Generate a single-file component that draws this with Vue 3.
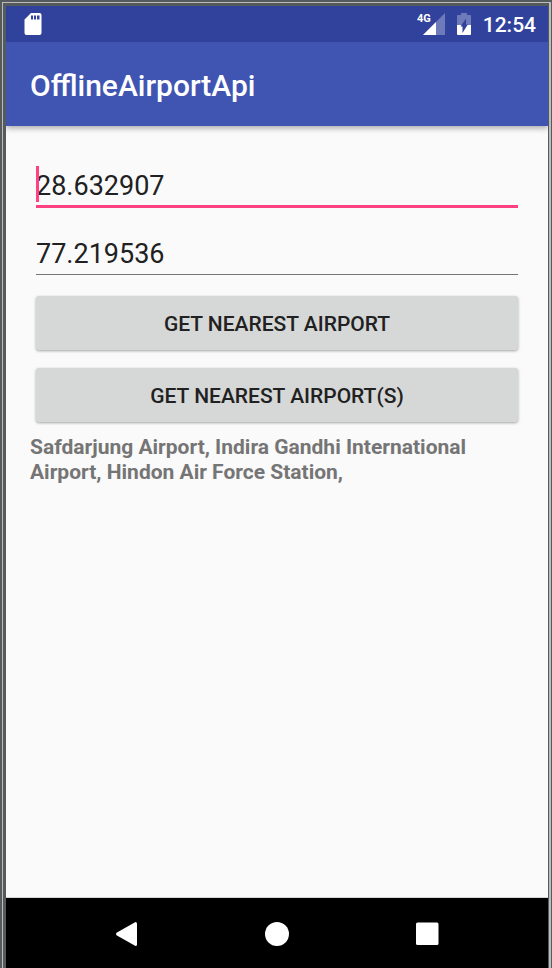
<script setup>
import { ref } from 'vue'

const latitude = ref('28.632907')
const longitude = ref('77.219536')
const airports = ['Safdarjung Airport', 'Indira Gandhi International Airport', 'Hindon Air Force Station']
const result = ref(airports.map((name) => name + ', ').join(''))

function showNearest() {
  result.value = airports[0]
}

function showAll() {
  result.value = airports.map((name) => name + ', ').join('')
}
</script>

<template>
  <div class="frame">
    <div class="bezel">
      <div class="screen">
        <div class="status">
          <svg class="sd" width="18" height="22" viewBox="0 0 18 22" aria-hidden="true">
            <path fill="#fff" fill-rule="evenodd" d="M7 0H15.500Q17.500 0 17.500 2V20Q17.500 22 15.500 22H2.500Q.5 22 .5 20V6.500ZM7 2.500V6.500H9V2.500ZM10 2.500V6.500H12V2.500ZM13 2.500V6.500H15.500V2.500Z" />
          </svg>
          <div class="signal">
            <span class="network">4G</span>
            <svg width="22" height="22" viewBox="0 0 22 22" aria-hidden="true">
              <path fill="#6f7abb" d="M22 0V22H0Z" />
              <path fill="#fff" d="M13 9V22H0Z" />
            </svg>
          </div>
          <svg class="battery" width="14" height="22" viewBox="0 0 14 22" aria-hidden="true">
            <path fill="#6f7abb" d="M4 0H10V2H13Q14 2 14 3V12H0V3Q0 2 1 2H4Z" />
            <path fill="#fff" d="M0 12H14V21Q14 22 13 22H1Q0 22 0 21Z" />
            <path fill="#30429b" d="M9 5.500V11.500H10.800L5.500 20V13.500H3.500Z" />
          </svg>
          <time class="clock">12:54</time>
        </div>
        <header class="appbar">
          <h1>OfflineAirportApi</h1>
        </header>
        <main class="content">
          <div class="field focused">
            <input v-model="latitude" type="text" aria-label="Latitude" />
            <span class="caret"></span>
          </div>
          <div class="field">
            <input v-model="longitude" type="text" aria-label="Longitude" />
          </div>
          <button class="action" type="button" @click="showNearest">GET NEAREST AIRPORT</button>
          <button class="action" type="button" @click="showAll">GET NEAREST AIRPORT(S)</button>
          <p class="result">{{ result }}</p>
        </main>
        <nav class="navbar">
          <button type="button" aria-label="Back">
            <svg width="24" height="24" viewBox="0 0 24 24"><path fill="#fff" d="M20.500 0Q22 0 22 1.500V22.500Q22 24 20.500 24L1.500 13.200Q.5 12 1.500 10.800Z" /></svg>
          </button>
          <button type="button" aria-label="Home">
            <svg width="24" height="24" viewBox="0 0 24 24"><circle cx="12" cy="12" r="12" fill="#fff" /></svg>
          </button>
          <button type="button" aria-label="Recent apps">
            <svg width="24" height="24" viewBox="0 0 24 24"><rect x="1" y=".5" width="22.500" height="22.500" rx="1.500" fill="#fff" /></svg>
          </button>
        </nav>
      </div>
    </div>
  </div>
</template>

<style>
body {
  background: #555a5c;
}
</style>

<style scoped>
.frame,
.frame * {
  box-sizing: border-box;
}

.frame {
  display: flex;
  min-height: 100vh;
  padding: 2px 1px 0 2px;
  background: #555a5c;
  font-family: Roboto, sans-serif;
}

.bezel {
  display: flex;
  flex: 1;
  padding: 3px 1px 0 3px;
  border: solid #bcbcbc;
  border-width: 1px 2px 0 1px;
}

.screen {
  display: flex;
  flex: 1;
  flex-direction: column;
  min-width: 0;
  background: #fafafa;
}

.status {
  display: flex;
  align-items: center;
  height: 36px;
  padding: 0 12px 0 18px;
  background: #30429b;
  color: #fff;
}

.signal {
  position: relative;
  display: flex;
  margin-left: auto;
}

.network {
  position: absolute;
  top: -1px;
  right: 14px;
  font-size: 11px;
  font-weight: 700;
  line-height: 14px;
}

.battery {
  margin-left: 12px;
}

.clock {
  margin-left: 12px;
  padding-top: 2px;
  font-size: 21px;
  font-weight: 500;
  line-height: 36px;
}

.appbar {
  position: relative;
  display: flex;
  align-items: center;
  height: 84px;
  padding: 4px 24px 0;
  background: #4055b1;
  box-shadow: 0 2px 6px rgba(0, 0, 0, 0.35);
  clip-path: inset(0 0 -12px 0);
  color: #fff;
}

h1 {
  margin: 0;
  font-size: 30px;
  font-weight: 500;
  line-height: 36px;
}

.content {
  display: flex;
  flex: 1;
  flex-direction: column;
  padding: 24px;
}

.field {
  position: relative;
  height: 68px;
  padding: 16px 6px 0;
}

.field input {
  display: block;
  width: 100%;
  height: 41px;
  padding: 0;
  border: 0;
  border-bottom: 1px solid #757575;
  border-radius: 0;
  outline: none;
  background: transparent;
  color: #212121;
  font: 400 27px/36px Roboto, sans-serif;
}

.field.focused input {
  height: 42px;
  border-bottom: 3px solid #ff4081;
}

.caret {
  position: absolute;
  top: 16px;
  left: 6px;
  width: 3px;
  height: 36px;
  background: #ff4081;
}

.action {
  height: 54px;
  margin: 10px 6px 8px;
  padding: 2px 12px 0;
  border: 0;
  border-radius: 3px;
  background: #d6d7d7;
  box-shadow: 0 1px 3px rgba(0, 0, 0, 0.35);
  color: #212121;
  font: 500 21px/24px Roboto, sans-serif;
}

.result {
  margin: 5px 0 0;
  color: #757575;
  font-size: 21px;
  font-weight: 700;
  line-height: 25px;
}

.navbar {
  display: flex;
  align-items: center;
  justify-content: center;
  gap: 78px;
  height: 71px;
  padding-top: 2px;
  border-top: 1px solid #d4d4d4;
  background: #000;
}

.navbar button {
  display: flex;
  justify-content: center;
  width: 72px;
  padding: 0;
  border: 0;
  background: transparent;
}
</style>
